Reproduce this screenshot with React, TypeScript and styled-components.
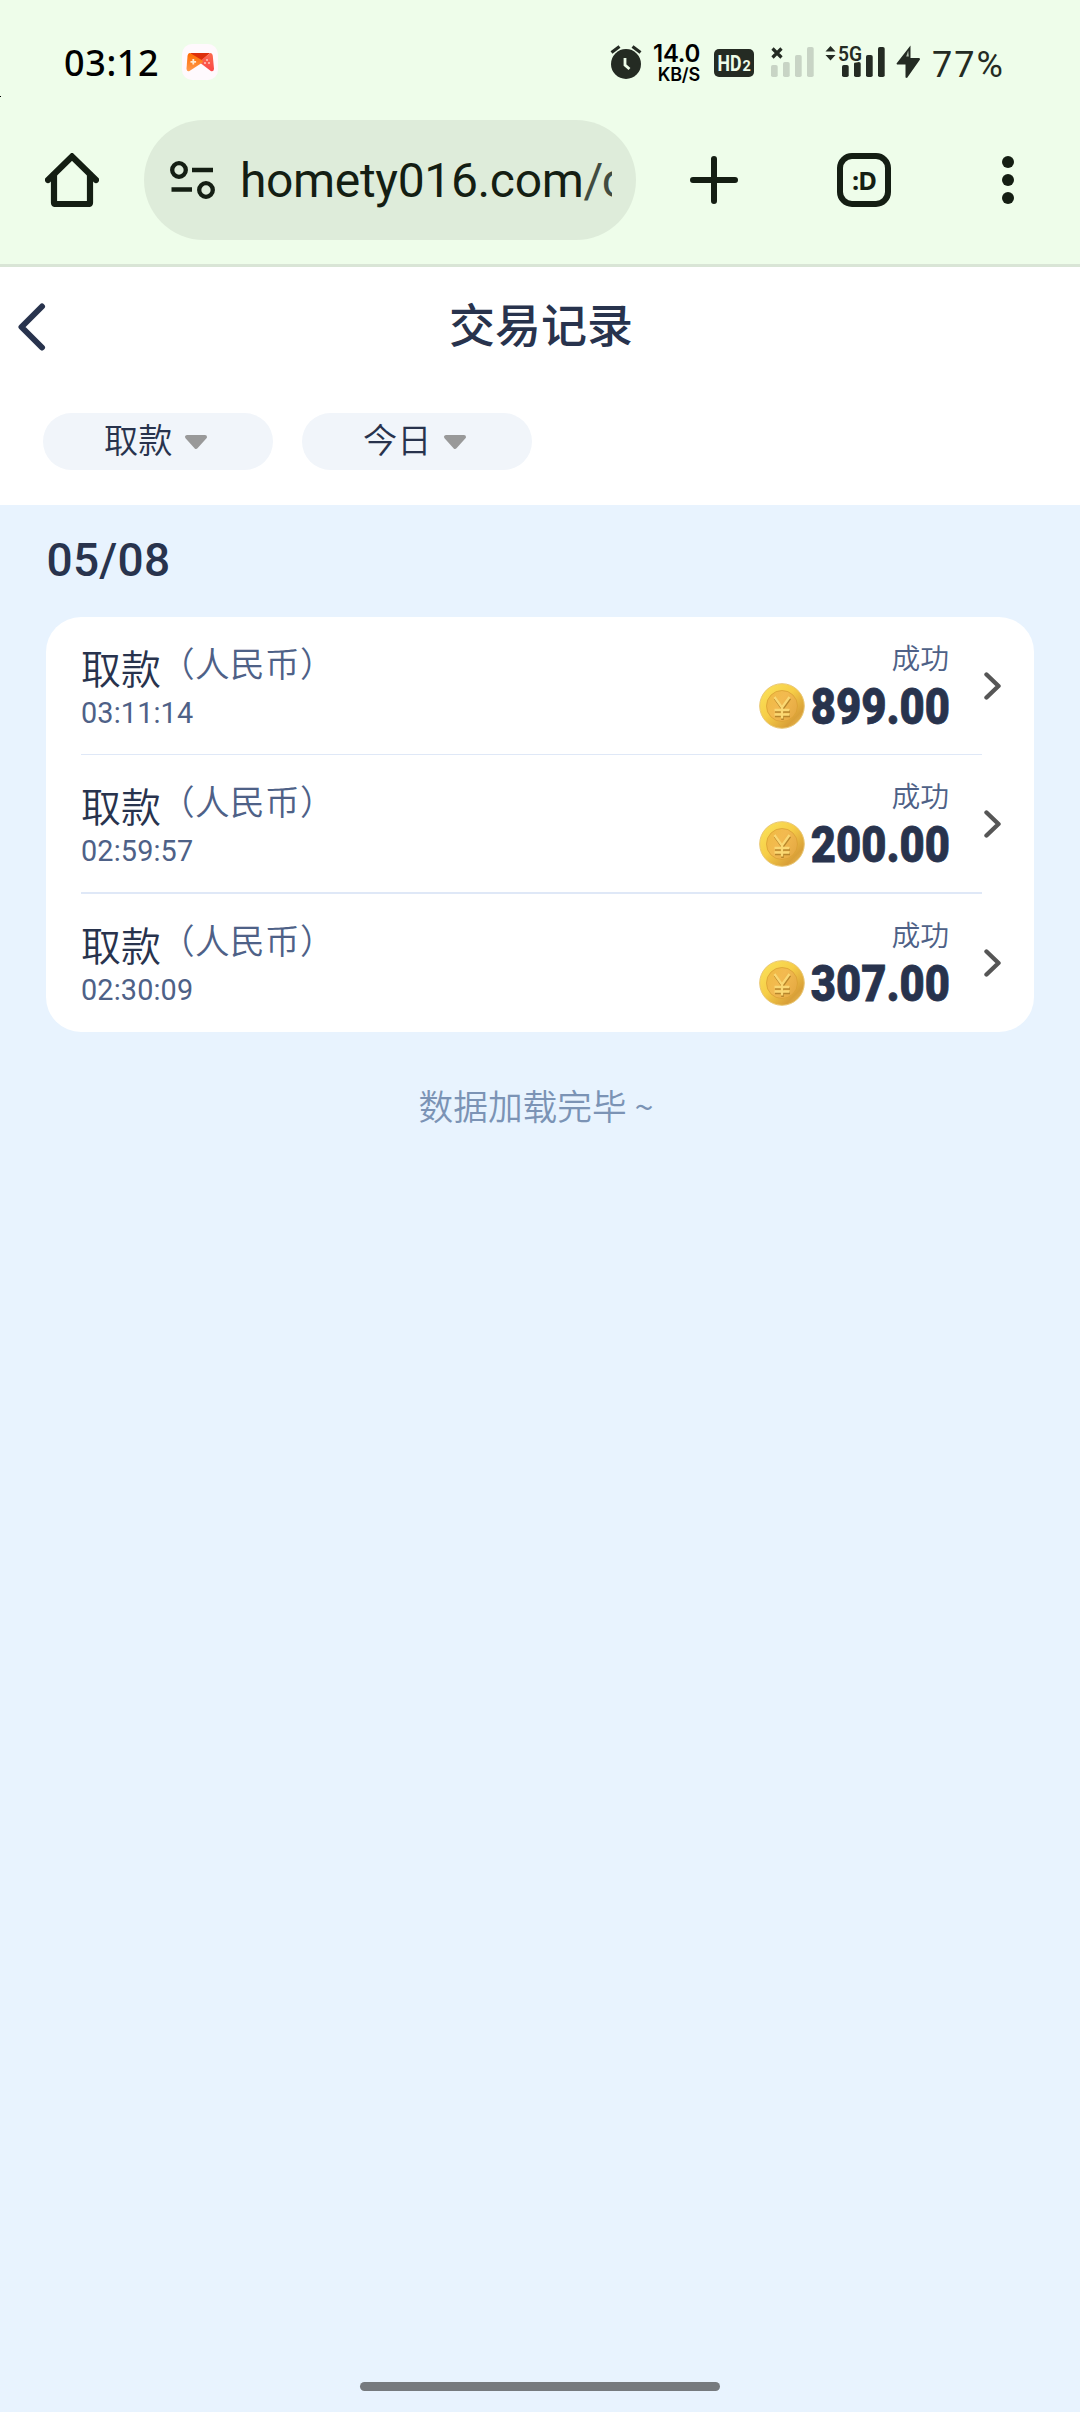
import React from "react";
import styled, { createGlobalStyle } from "styled-components";

const LATIN = `Roboto, "Noto Sans CJK SC", sans-serif`;
const CJK = `"Noto Sans CJK SC", Roboto, sans-serif`;

const GlobalStyle = createGlobalStyle`
  * { box-sizing: border-box; }
  body { margin: 0; background: #e8f3fe; font-family: ${LATIN}; }
  svg { display: block; flex: none; }
`;

const Screen = styled.div`
  width: 1080px;
  height: 2412px;
  display: flex;
  flex-direction: column;
  overflow: hidden;
  background: #e8f3fe;
`;

/* ---------- system status bar ---------- */

const StatusBar = styled.div`
  height: 120px;
  padding: 42px 74px 0 64px;
  display: flex;
  justify-content: space-between;
  background: #eefdea;
  color: #242b23;
`;

const StatusGroup = styled.div`
  display: flex;
  align-items: flex-start;
  height: 40px;
`;

const Clock = styled.span`
  width: 118px;
  font: 500 36px/42px "Noto Sans", ${LATIN};
  letter-spacing: 0.6px;
  color: #000;
  white-space: nowrap;
`;

const AppIcon = styled.svg`
  margin-top: 2px;
`;

const NetSpeed = styled.div`
  width: 50px;
  margin-left: 8px;
  display: flex;
  flex-direction: column;
  align-items: flex-end;
  color: #000;
`;

const SpeedValue = styled.span`
  margin-top: 1px;
  font: 600 24px/22px Inter, ${LATIN};
  letter-spacing: -0.3px;
`;

const SpeedUnit = styled.span`
  margin-top: 1px;
  font: 600 18px/18px Inter, ${LATIN};
  letter-spacing: -0.2px;
`;

const HdBadge = styled.svg`
  margin: 7px 17px 0 14px;
`;

const SignalGroup = styled.div`
  margin-left: 11px;
  display: flex;
`;

const Battery = styled.span`
  width: 74px;
  margin-left: 12px;
  font: 400 36px/46px ${LATIN};
  letter-spacing: 2px;
  white-space: nowrap;
`;

const EdgeTick = styled.i`
  position: absolute;
  left: 0;
  top: 96px;
  width: 1px;
  height: 1px;
  background: #000;
`;

/* ---------- browser toolbar ---------- */

const Toolbar = styled.div`
  height: 147px;
  padding: 0 24px 24px 45px;
  display: flex;
  background: #eefdea;
  border-bottom: 3px solid #d9e5d6;
`;

const ToolButton = styled.div<{ $width: number }>`
  width: ${(p) => p.$width}px;
  height: 120px;
  display: flex;
  align-items: center;
  justify-content: flex-start;
`;

const Actions = styled.div`
  margin-left: 54px;
  display: flex;
`;

const AddressPill = styled.div`
  width: 492px;
  height: 120px;
  padding: 0 24px 0 26px;
  display: flex;
  align-items: center;
  border-radius: 60px;
  background: #deecda;
`;

const Url = styled.div`
  flex: 1;
  margin-left: 25px;
  overflow: hidden;
  white-space: nowrap;
  font: 380 48px/121px ${LATIN};
  letter-spacing: -0.35px;
  color: #141e13;
`;

const UrlPath = styled.span`
  letter-spacing: -1.5px;
  color: #414b40;
`;

const TabFace = styled.div`
  width: 54px;
  height: 54px;
  display: flex;
  align-items: center;
  justify-content: center;
  border: 6px solid #141e13;
  border-radius: 15px;
  color: #141e13;
  font: 700 25.5px/42px "Noto Sans", ${LATIN};
  letter-spacing: -0.8px;
`;

/* ---------- page header ---------- */

const PageHeader = styled.header`
  height: 238px;
  background: #fff;
`;

const TitleBar = styled.div`
  height: 118px;
  padding: 2px 0 0 17px;
  display: grid;
  grid-template-columns: 240px 1fr 255px;
  align-items: center;
`;

const Title = styled.h1`
  margin: 0 0 10px;
  text-align: center;
  font: 500 46px/106px ${CJK};
  color: #28334d;
`;

const Filters = styled.div`
  padding: 28px 43px 0;
  display: flex;
  gap: 29px;
`;

const Chip = styled.div`
  width: 230px;
  height: 57px;
  padding-left: 61px;
  display: flex;
  align-items: center;
  gap: 12px;
  border-radius: 29px;
  background: #f1f5fa;
`;

const ChipLabel = styled.span`
  margin-bottom: 6px;
  color: #28334d;
  font: 350 34.2px/51px ${CJK};
`;

/* ---------- records ---------- */

const DateLabel = styled.h2`
  margin: 0;
  padding-left: 46.5px;
  height: 112px;
  font: 500 46px/111px ${LATIN};
  letter-spacing: 0.25px;
  color: #28334d;
`;

const Card = styled.section`
  width: 988px;
  height: 415px;
  margin-left: 46px;
  border-radius: 35px;
  background: #fff;
`;

const Row = styled.div<{ $height: number }>`
  height: ${(p) => p.$height}px;
  padding: 0 32px 0 35px;
  display: flex;
  justify-content: space-between;
`;

const RowBody = styled.div<{ $line: number }>`
  width: 901px;
  padding-right: 32px;
  display: flex;
  justify-content: space-between;
  border-bottom: ${(p) => p.$line}px solid #dfe8f7;
`;

const Kind = styled.div`
  padding-top: 23px;
`;

const KindLine = styled.div`
  display: flex;
  height: 54px;
  color: #28334d;
  font: 350 40px/54px ${CJK};
`;

const Currency = styled.span`
  margin-left: -1px;
  color: #4e6187;
  font: 350 34.6px/44px ${CJK};
  letter-spacing: 0.4px;
`;

const Time = styled.div`
  color: #4e6187;
  font: 400 28.8px/39px ${LATIN};
  letter-spacing: 0.15px;
`;

const Result = styled.div`
  display: flex;
  flex-direction: column;
  align-items: flex-end;
  padding-top: 21px;
`;

const Status = styled.div`
  height: 45px;
  padding-right: 1px;
  color: #4e6187;
  font: 350 28.8px/38px ${CJK};
`;

const AmountLine = styled.div`
  display: flex;
`;

const Amount = styled.span`
  width: 145px;
  display: flex;
  justify-content: flex-end;
  color: #28334d;
  font: 900 50px/48px ${LATIN};
  white-space: nowrap;
`;

const AmountText = styled.span`
  transform: scaleX(0.87);
  transform-origin: right center;
  -webkit-text-stroke: 0.8px #28334d;
`;

const RowArrow = styled.svg`
  margin-top: 55px;
`;

const EndNote = styled.p`
  margin: 48px 0 0;
  padding-right: 8px;
  text-align: center;
  color: #7b93b5;
  font: 350 34.7px/50px ${CJK};
`;

const GestureBar = styled.div`
  width: 360px;
  height: 9px;
  margin: auto auto 21px;
  border-radius: 5px;
  background: #767a7e;
`;

const INK = "#242b23";
const DARK = "#141e13";

const GameIcon = () => (
  <AppIcon width="36" height="36" viewBox="0 0 36 36">
    <defs>
      <linearGradient id="padL" x1="0" y1="0" x2="0" y2="1">
        <stop offset="0" stopColor="#ff6a00" />
        <stop offset="1" stopColor="#ff9a4d" />
      </linearGradient>
      <linearGradient id="padR" x1="0" y1="0" x2="0" y2="1">
        <stop offset="0" stopColor="#fb6a4e" />
        <stop offset="1" stopColor="#fb4848" />
      </linearGradient>
    </defs>
    <rect width="36" height="36" rx="10" fill="#fff9fd" />
    <path d="M8 9H28L18 18Z" fill="#dd2f0c" />
    <path d="M28 9Q30.500 9 30.800 12L32 25Q31.600 28 28.800 27L17 18Z" fill="url(#padR)" />
    <path d="M8 9Q6 9 5.500 12L4.500 25Q5 28 7.500 27L20.500 18.500Q21.500 17.500 20.500 16.500Z" fill="url(#padL)" />
    <path d="M11.300 15v5.600M8.500 17.800h5.600" stroke="#ffe9d0" strokeWidth="1.800" />
    <g fill="#ffc4bd">
      <circle cx="25" cy="16" r="1" />
      <circle cx="23" cy="19" r="1" />
      <circle cx="27" cy="19" r="1" />
    </g>
  </AppIcon>
);

const AlarmIcon = () => (
  <svg width="32" height="40" viewBox="0 0 32 40">
    <circle cx="16" cy="22" r="15" fill={INK} />
    <path d="M1.500 10.500L9.500 4.500M30.500 10.500L22.500 4.500" stroke={INK} strokeWidth="3.200" />
    <path d="M15 16v7l4.500 4" fill="none" stroke="#eefdea" strokeWidth="2.800" />
  </svg>
);

const HdIcon = () => (
  <HdBadge width="40" height="28" viewBox="0 0 40 28" fill="#eefdea" fontFamily="Roboto">
    <rect width="40" height="28" rx="5" fill={INK} />
    <text x="3.500" y="22" fontWeight="700" fontSize="22" textLength="24" lengthAdjust="spacingAndGlyphs">
      HD
    </text>
    <text x="28.500" y="22" fontWeight="700" fontSize="14.500">
      2
    </text>
  </HdBadge>
);

const Bars = ({ fill }: { fill: string }) => (
  <g fill={fill}>
    <rect x="0" y="23" width="6.700" height="12" rx="1.800" />
    <rect x="12" y="20" width="6.700" height="15" rx="1.800" />
    <rect x="24" y="13" width="6.700" height="22" rx="1.800" />
    <rect x="36" y="5" width="6.700" height="30" rx="1.800" />
  </g>
);

const NoSim = () => (
  <svg width="43" height="40" viewBox="0 0 43 40">
    <Bars fill="#c8d4c5" />
    <path d="M1.500 6.500L10.500 15.500M10.500 6.500L1.500 15.500" stroke={INK} strokeWidth="3.200" />
  </svg>
);

const Signal5G = () => (
  <svg width="71" height="40" viewBox="0 0 71 40">
    <path d="M0.500 9.500L5.500 4L10.500 9.500ZM0.500 13L5.500 18.500L10.500 13Z" fill={INK} />
    <g transform="translate(17 0)">
      <Bars fill={INK} />
    </g>
    <text
      x="13" y="18.500" fontFamily="Roboto" fontWeight="600" fontSize="21" textLength="24"
      lengthAdjust="spacingAndGlyphs" fill={INK} stroke="#eefdea" strokeWidth="3" paintOrder="stroke"
    >
      5G
    </text>
  </svg>
);

const Bolt = () => (
  <svg width="24" height="40" viewBox="0 0 24 40">
    <path d="M14.500 3.500L0.500 21.500L1 22.500H9.500V35.500L11 36L24 17.500L23.500 16H14.500Z" fill={INK} />
    <path d="M10.200 14.500L12.200 8.500L12.800 14.500Z" fill="#eefdea" opacity="0.700" />
  </svg>
);

const HomeIcon = () => (
  <svg width="54" height="54" viewBox="0 0 54 54" fill="none" stroke={DARK} strokeWidth="6.200" strokeLinecap="round">
    <path d="M3 27L27 3.500L51 27" strokeLinejoin="miter" />
    <path d="M9 22V49.500Q9 51 10.500 51H43.500Q45 51 45 49.500V22" strokeLinejoin="round" />
  </svg>
);

const TuneIcon = () => (
  <svg width="45" height="38" viewBox="0 0 45 38" fill="none" stroke={DARK} strokeWidth="4.300">
    <circle cx="9" cy="9" r="6.800" />
    <circle cx="36" cy="29" r="6.800" />
    <path d="M22 9H43M1.500 28.500H22" />
  </svg>
);

const PlusIcon = () => (
  <svg width="48" height="48" viewBox="0 0 48 48" stroke={DARK} strokeWidth="6" strokeLinecap="round">
    <path d="M24 3V45M3 24H45" />
  </svg>
);

const MoreIcon = () => (
  <svg width="12" height="48" viewBox="0 0 12 48" fill={DARK}>
    <circle cx="6" cy="6" r="6" />
    <circle cx="6" cy="24" r="6" />
    <circle cx="6" cy="42" r="6" />
  </svg>
);

const BackIcon = () => (
  <svg width="30" height="48" viewBox="0 0 30 48" fill="none" stroke="#28334d" strokeWidth="6" strokeLinecap="round" strokeLinejoin="round">
    <path d="M25 3.500L4.500 24L25 44.500" />
  </svg>
);

const Caret = () => (
  <svg width="24" height="16" viewBox="0 0 24 16">
    <path d="M3 3H21L12 13Z" fill="#999" stroke="#999" strokeWidth="4" strokeLinejoin="round" />
  </svg>
);

const Coin = () => (
  <svg width="46" height="46" viewBox="0 0 46 46">
    <defs>
      <linearGradient id="coinRim" x1="0" y1="0" x2="1" y2="1">
        <stop offset="0" stopColor="#fbe45c" />
        <stop offset="0.450" stopColor="#f6cd47" />
        <stop offset="0.780" stopColor="#d9a038" />
        <stop offset="1" stopColor="#efc462" />
      </linearGradient>
      <linearGradient id="coinFace" x1="0" y1="0" x2="1" y2="0.600">
        <stop offset="0" stopColor="#efbb40" />
        <stop offset="0.500" stopColor="#f3ba50" />
        <stop offset="1" stopColor="#e6ab44" />
      </linearGradient>
    </defs>
    <circle cx="23" cy="23" r="22.300" fill="url(#coinRim)" stroke="#e9c673" strokeWidth="1" />
    <circle cx="23" cy="23" r="15.500" fill="url(#coinFace)" stroke="#dba134" strokeWidth="0.800" />
    <g fill="none" strokeWidth="2.600">
      <path d="M15.500 14.500L23 25L30.500 14.500M23 25V36M15.500 27.500H30.500M15.500 32H30.500" stroke="#b8872c" transform="translate(0.500 0.900)" />
      <path d="M15.500 14L23 24.500L30.500 14M23 24.500V35.500M15.500 27H30.500M15.500 31.500H30.500" stroke="#fad873" strokeWidth="2.300" />
    </g>
  </svg>
);

const Arrow = () => (
  <RowArrow width="18" height="28" viewBox="0 0 18 28" fill="none" stroke="#565656" strokeWidth="4.400" strokeLinecap="round" strokeLinejoin="round">
    <path d="M2.500 2.500L14.500 14L2.500 25.500" />
  </RowArrow>
);

const records = [
  { time: "03:11:14", amount: "899.00", height: 138, line: 1 },
  { time: "02:59:57", amount: "200.00", height: 139, line: 2 },
  { time: "02:30:09", amount: "307.00", height: 138, line: 0 },
];

export default function App() {
  return (
    <Screen>
      <GlobalStyle />
      <EdgeTick />
      <StatusBar>
        <StatusGroup>
          <Clock>03:12</Clock>
          <GameIcon />
        </StatusGroup>
        <StatusGroup>
          <AlarmIcon />
          <NetSpeed>
            <SpeedValue>14.0</SpeedValue>
            <SpeedUnit>KB/S</SpeedUnit>
          </NetSpeed>
          <HdIcon />
          <NoSim />
          <SignalGroup>
            <Signal5G />
            <Bolt />
          </SignalGroup>
          <Battery>77%</Battery>
        </StatusGroup>
      </StatusBar>

      <Toolbar>
        <ToolButton $width={99}>
          <HomeIcon />
        </ToolButton>
        <AddressPill>
          <TuneIcon />
          <Url>
            homety016.com<UrlPath>/c</UrlPath>
          </Url>
        </AddressPill>
        <Actions>
          <ToolButton $width={147}>
            <PlusIcon />
          </ToolButton>
          <ToolButton $width={165}>
            <TabFace>:D</TabFace>
          </ToolButton>
          <ToolButton $width={12}>
            <MoreIcon />
          </ToolButton>
        </Actions>
      </Toolbar>

      <PageHeader>
        <TitleBar>
          <BackIcon />
          <Title>交易记录</Title>
        </TitleBar>
        <Filters>
          <Chip>
            <ChipLabel>取款</ChipLabel>
            <Caret />
          </Chip>
          <Chip>
            <ChipLabel>今日</ChipLabel>
            <Caret />
          </Chip>
        </Filters>
      </PageHeader>

      <DateLabel>05/08</DateLabel>
      <Card>
        {records.map((r) => (
          <Row key={r.time} $height={r.height}>
            <RowBody $line={r.line}>
              <Kind>
                <KindLine>
                  取款<Currency>（人民币）</Currency>
                </KindLine>
                <Time>{r.time}</Time>
              </Kind>
              <Result>
                <Status>成功</Status>
                <AmountLine>
                  <Coin />
                  <Amount>
                    <AmountText>{r.amount}</AmountText>
                  </Amount>
                </AmountLine>
              </Result>
            </RowBody>
            <Arrow />
          </Row>
        ))}
      </Card>
      <EndNote>数据加载完毕 ~</EndNote>
      <GestureBar />
    </Screen>
  );
}
